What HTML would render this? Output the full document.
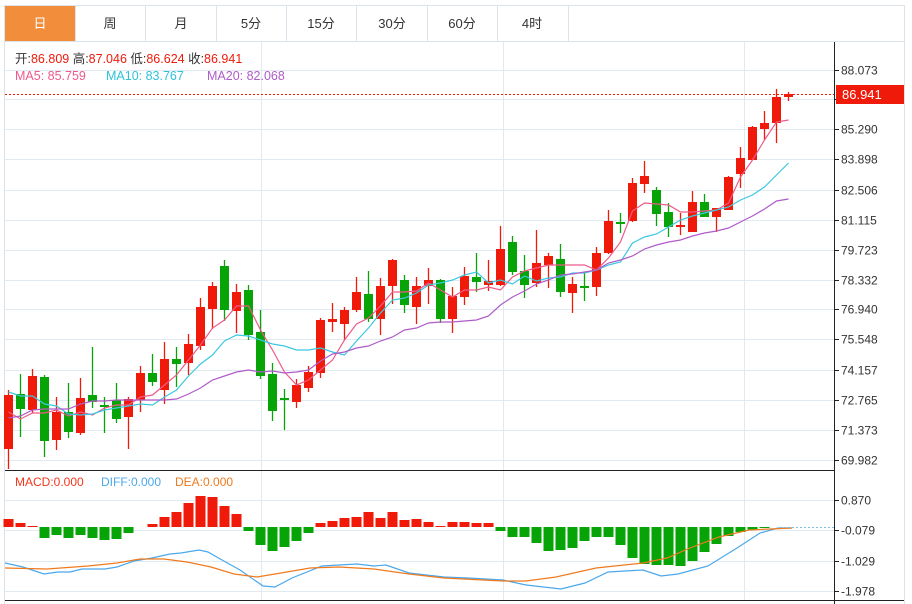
<!DOCTYPE html>
<html><head><meta charset="utf-8"><style>
html,body{margin:0;padding:0;background:#fff;width:912px;height:604px;overflow:hidden}
svg{display:block;font-family:"Liberation Sans","Noto Sans CJK SC",sans-serif}
</style></head><body>
<svg id="s" width="912" height="604" xmlns="http://www.w3.org/2000/svg">
<rect x="0" y="0" width="912" height="604" fill="#fff"/>
<!-- tabs -->
<g stroke="#dde3ea" fill="none"><line x1="5" y1="5.5" x2="904" y2="5.5"/><line x1="4.5" y1="5" x2="4.5" y2="604"/><line x1="904.5" y1="5" x2="904.5" y2="604"/>
<line x1="5" y1="41.5" x2="904" y2="41.5"/>
<line x1="75.5" y1="5" x2="75.5" y2="41"/><line x1="145.5" y1="5" x2="145.5" y2="41"/><line x1="216.5" y1="5" x2="216.5" y2="41"/><line x1="286.5" y1="5" x2="286.5" y2="41"/><line x1="356.5" y1="5" x2="356.5" y2="41"/><line x1="427.5" y1="5" x2="427.5" y2="41"/><line x1="497.5" y1="5" x2="497.5" y2="41"/><line x1="568.5" y1="5" x2="568.5" y2="41"/></g>
<rect x="5" y="6" width="70" height="35" fill="#f28d3c"/>
<g font-size="13" fill="#333" text-anchor="middle">
<text x="40" y="28" fill="#fff">日</text><text x="110" y="28">周</text><text x="181" y="28">月</text><text x="251" y="28">5分</text><text x="321" y="28">15分</text><text x="392" y="28">30分</text><text x="462" y="28">60分</text><text x="532" y="28">4时</text></g>
<!-- grid -->
<g id="grid" stroke="#e2eaf1" stroke-width="1"></g>
<g stroke="#e2eaf1"><line x1="261.5" y1="42" x2="261.5" y2="600"/><line x1="503.5" y1="42" x2="503.5" y2="600"/><line x1="744.5" y1="42" x2="744.5" y2="600"/></g>
<line x1="5" y1="470.5" x2="834" y2="470.5" stroke="#222"/>
<line x1="5" y1="600.5" x2="904" y2="600.5" stroke="#222"/>
<line x1="834.5" y1="42" x2="834.5" y2="604" stroke="#222"/>
<g id="ax" font-size="12" fill="#333"></g>
<g id="c"></g>
<line x1="5" y1="94.5" x2="834" y2="94.5" stroke="#f01a0a" stroke-dasharray="2,2"/>
<line x1="780" y1="527.5" x2="834" y2="527.5" stroke="#7cbde0" stroke-dasharray="2,2"/>
<rect x="836" y="85" width="68" height="19" fill="#f01a0a"/>
<text x="842" y="99" font-size="13" fill="#fff">86.941</text>
<g font-size="12.5"><text x="15" y="63" fill="#333">开:<tspan fill="#f01a0a">86.809</tspan>  高:<tspan fill="#f01a0a">87.046</tspan>  低:<tspan fill="#f01a0a">86.624</tspan>  收:<tspan fill="#f01a0a">86.941</tspan></text>
<text x="15" y="80" fill="#ee5a8a">MA5: 85.759</text><text x="106" y="80" fill="#2cc3d8">MA10: 83.767</text><text x="207" y="80" fill="#b05cc8">MA20: 82.068</text>
<text x="15" y="486" fill="#f5361c" font-size="12">MACD:0.000</text><text x="101" y="486" fill="#4aa8ec" font-size="12">DIFF:0.000</text><text x="175" y="486" fill="#f07a1e" font-size="12">DEA:0.000</text></g>
</svg>
<script>
var NS="http://www.w3.org/2000/svg",g=document.getElementById('c'),gr=document.getElementById('grid'),ax=document.getElementById('ax');
function el(t,a,p){var e=document.createElementNS(NS,t);for(var k in a)e.setAttribute(k,a[k]);(p||g).appendChild(e);return e}
var L=[[70,"88.073"],[99,""],[129,"85.290"],[159,"83.898"],[190,"82.506"],[220,"81.115"],[250,"79.723"],[280,"78.332"],[309,"76.940"],[339,"75.548"],[370,"74.157"],[400,"72.765"],[430,"71.373"],[460,"69.982"],[500,"0.870"],[530,"-0.079"],[561,"-1.029"],[591,"-1.978"]];
L.forEach(function(l){el('line',{x1:5,y1:l[0]+.5,x2:834,y2:l[0]+.5},gr);el('line',{x1:834,y1:l[0]+.5,x2:839,y2:l[0]+.5,stroke:'#222'},ax);if(l[1]){var t=el('text',{x:841,y:l[0]+4.5},ax);t.textContent=l[1];}});
// candles: top, bottom, wickTop, wickBottom, color(r/g)
var C=[[395,449,390,469,'r'],[394,409,374,437,'g'],[376,410,369,413,'r'],[377,441,375,457,'g'],[412,440,397,450,'r'],[412,432,383,438,'g'],[398,433,378,435,'r'],[395,402,347,408,'g'],[405,407,397,433,'g'],[400,419,383,423,'g'],[399,417,397,449,'r'],[373,400,366,412,'r'],[373,382,354,386,'g'],[359,390,342,404,'r'],[359,364,347,387,'g'],[344,363,334,375,'r'],[307,346,298,350,'r'],[286,309,282,329,'r'],[266,310,260,321,'g'],[292,311,284,333,'r'],[290,335,285,340,'g'],[332,376,310,379,'g'],[374,411,363,421,'g'],[398,400,389,430,'g'],[385,402,379,408,'r'],[372,388,366,392,'r'],[320,373,318,378,'r'],[319,322,303,332,'r'],[310,324,307,340,'r'],[292,310,277,312,'r'],[294,319,271,322,'g'],[286,319,278,335,'r'],[260,286,259,304,'r'],[280,305,275,313,'g'],[286,307,277,324,'r'],[280,286,268,304,'r'],[280,319,279,323,'g'],[296,319,287,333,'r'],[276,297,267,305,'r'],[277,282,253,292,'g'],[281,285,260,291,'r'],[249,285,226,286,'r'],[242,272,236,275,'g'],[271,285,255,298,'g'],[263,283,230,287,'r'],[256,265,253,288,'r'],[259,292,244,297,'g'],[284,293,277,313,'r'],[286,288,272,301,'g'],[253,287,247,296,'r'],[221,253,210,254,'r'],[222,224,213,233,'g'],[183,221,178,222,'r'],[176,184,161,193,'r'],[190,214,187,226,'g'],[212,227,203,237,'g'],[225,227,213,235,'r'],[202,232,191,232,'r'],[202,217,194,217,'g'],[208,217,208,232,'r'],[177,210,176,210,'r'],[158,174,147,188,'r'],[127,160,126,160,'r'],[123,129,111,140,'r'],[97,123,89,143,'r'],[94,97,92,101,'r']];
var R='#f01a0a',G='#06a406';
function X(i){return 8.5+12*i}
// MACD bars
var M=[519,523,526,538,535,538,535,538,540,539,533,527,524,517,512,503,496,497,506,514,531,545,551,547,541,533,523,521,518,517,512,518,512,520,519,522,526,522,522,523,523,531,537,537,543,551,550,548,541,537,537,545,558,564,565,565,566,561,552,544,536,532,530,528,527,527];
M.forEach(function(v,i){var z=527,y=Math.min(v,z),h=Math.abs(v-z);if(h<1)return;el('rect',{x:X(i)-5,y:y,width:10,height:h,fill:v<z?R:G});});
function pl(pts,c){el('polyline',{points:pts.map(function(p){return p.join(',')}).join(' '),fill:'none',stroke:c,'stroke-width':1.2});}
pl([[5,563],[23,567],[44,574],[58,572],[70,572],[82,569],[105,569],[117,567],[134,561],[152,558],[170,554],[181,553],[199,550],[208,552],[222,560],[240,570],[263,586],[275,587],[292,578],[322,566],[357,564],[374,566],[386,565],[409,573],[444,577],[468,578],[503,580],[526,585],[561,589],[585,583],[608,572],[643,570],[661,576],[678,574],[708,566],[737,548],[760,533],[778,528],[792,528]],'#4aa8ec');
pl([[5,568],[47,569],[88,566],[117,563],[140,559],[164,559],[187,562],[211,567],[234,574],[257,577],[281,573],[310,568],[339,567],[374,569],[409,574],[444,578],[503,581],[526,581],[556,577],[596,568],[643,563],[667,558],[690,548],[719,537],[749,530],[792,528]],'#f07a1e');
C.forEach(function(c,i){var col=c[4]=='r'?R:G,x=X(i);el('line',{x1:x,y1:c[2],x2:x,y2:c[3],stroke:col,'stroke-width':1.3});el('rect',{x:x-4.5,y:c[0],width:9,height:Math.max(c[1]-c[0],1.5),fill:col});});
var xs=C.map(function(c,i){return X(i)});
function ma(ys,c){pl(ys.map(function(y,i){return [xs[i],y]}),c);}
ma([412,419,413,413,410,416,412,415,408,405,405,397,395,385,375,360,345,328,320,306,306,330,350,372,385,380,370,360,340,324,318,306,292,292,291,283,290,297,290,290,287,290,277,271,268,265,265,265,265,270,258,242,211,203,204,205,212,212,211,210,203,177,160,140,122,120],'#ee5a8a');
ma([392,396,396,404,406,414,415,414,410,408,406,404,405,397,390,376,364,355,341,335,336,340,344,346,350,350,348,352,355,341,328,313,300,298,293,285,283,280,275,272,283,280,284,276,281,278,277,273,273,270,265,262,243,237,234,227,220,216,213,210,207,200,195,187,175,163],'#3cc8e0');
ma([418,416,410,409,409,409,404,401,401,400,400,400,400,400,399,394,388,380,376,372,370,372,371,373,372,370,361,354,352,348,346,341,337,330,328,323,322,322,321,320,316,305,297,291,284,280,275,274,272,270,263,260,256,249,245,242,240,236,233,231,228,222,216,209,201,199],'#b05cc8');
</script>
</body></html>
